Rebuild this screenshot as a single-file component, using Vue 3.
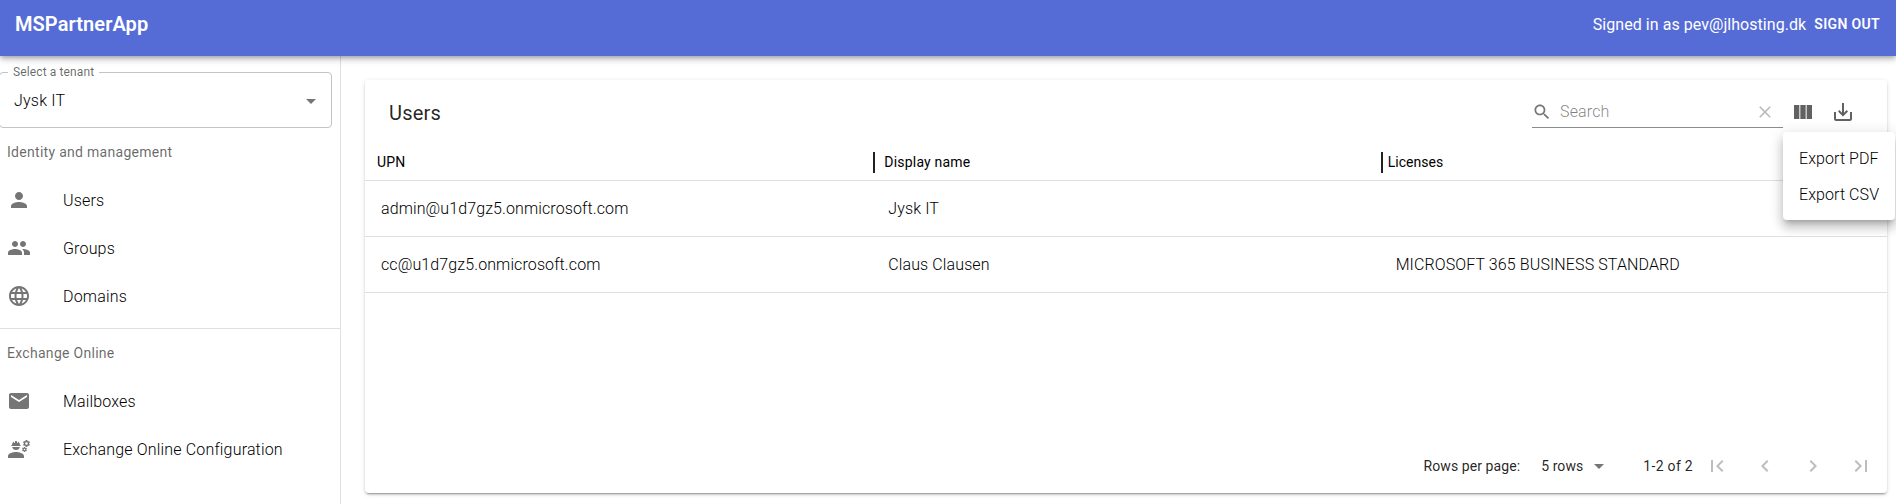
<script setup>
const icons = {
  person: 'M12 12c2.21 0 4-1.79 4-4s-1.79-4-4-4-4 1.79-4 4 1.79 4 4 4zm0 2c-2.67 0-8 1.34-8 4v2h16v-2c0-2.66-5.33-4-8-4z',
  group: 'M16 11c1.66 0 2.99-1.34 2.99-3S17.66 5 16 5s-3 1.34-3 3 1.34 3 3 3zm-8 0c1.66 0 2.99-1.34 2.99-3S9.66 5 8 5 5 6.34 5 8s1.34 3 3 3zm0 2c-2.33 0-7 1.17-7 3.5V19h14v-2.5c0-2.33-4.67-3.5-7-3.5zm8 0c-.29 0-.62.02-.97.05 1.16.84 1.97 1.97 1.97 3.45V19h6v-2.5c0-2.33-4.67-3.5-7-3.5z',
  globe: 'M11.99 2C6.47 2 2 6.48 2 12s4.47 10 9.99 10C17.52 22 22 17.52 22 12S17.52 2 11.99 2zm6.93 6h-2.95c-.32-1.25-.78-2.45-1.38-3.56 1.84.63 3.37 1.91 4.33 3.56zM12 4.04c.83 1.2 1.48 2.53 1.91 3.96h-3.82c.43-1.43 1.08-2.76 1.91-3.96zM4.26 14C4.1 13.36 4 12.69 4 12s.1-1.36.26-2h3.38c-.08.66-.14 1.32-.14 2s.06 1.34.14 2H4.26zm.82 2h2.95c.32 1.25.78 2.45 1.38 3.56-1.84-.63-3.37-1.9-4.33-3.56zm2.95-8H5.08c.96-1.66 2.49-2.93 4.33-3.56C8.81 5.55 8.35 6.75 8.03 8zM12 19.96c-.83-1.2-1.48-2.53-1.91-3.96h3.82c-.43 1.43-1.08 2.76-1.91 3.96zM14.34 14H9.66c-.09-.66-.16-1.32-.16-2s.07-1.35.16-2h4.68c.09.65.16 1.32.16 2s-.07 1.34-.16 2zm.25 5.56c.6-1.11 1.06-2.31 1.38-3.56h2.95c-.96 1.65-2.49 2.93-4.33 3.56zM16.36 14c.08-.66.14-1.32.14-2s-.06-1.34-.14-2h3.38c.16.64.26 1.31.26 2s-.1 1.36-.26 2h-3.38z',
  mail: 'M20 4H4c-1.1 0-1.99.9-1.99 2L2 18c0 1.1.9 2 2 2h16c1.1 0 2-.9 2-2V6c0-1.1-.9-2-2-2zm0 4l-8 5-8-5V6l8 5 8-5v2z',
  engineer: 'M9 15c-2.67 0-8 1.34-8 4v2h16v-2c0-2.66-5.33-4-8-4zM22.1 6.84c.01-.11.02-.22.02-.34s-.01-.23-.03-.34l.74-.58c.07-.05.08-.15.04-.22l-.7-1.21c-.04-.08-.14-.1-.21-.08l-.86.35c-.18-.14-.38-.25-.59-.34l-.13-.93c-.02-.09-.09-.15-.18-.15h-1.4c-.09 0-.16.06-.17.15l-.13.93c-.21.09-.41.21-.59.34l-.87-.35c-.08-.03-.17 0-.21.08l-.7 1.21c-.04.08-.03.17.04.22l.74.58c-.02.11-.03.23-.03.34s.01.23.03.34l-.74.58c-.07.05-.08.15-.04.22l.7 1.21c.04.08.14.1.21.08l.87-.35c.18.14.38.25.59.34l.13.93c.01.09.08.15.17.15h1.4c.09 0 .16-.06.17-.15l.13-.93c.21-.09.41-.21.59-.34l.87.35c.08.03.17 0 .21-.08l.7-1.21c.04-.08.03-.17-.04-.22l-.73-.58zm-2.6.91c-.69 0-1.25-.56-1.25-1.25s.56-1.25 1.25-1.25 1.25.56 1.25 1.25-.56 1.25-1.25 1.25zM19.92 11.68l-.5-.87c-.03-.06-.1-.08-.15-.06l-.62.25c-.13-.1-.27-.18-.42-.24l-.09-.66c-.02-.06-.08-.1-.14-.1h-1c-.06 0-.11.04-.12.11l-.09.66c-.15.06-.29.15-.42.24l-.62-.25c-.06-.02-.12 0-.15.06l-.5.87c-.03.06-.02.12.03.16l.53.41c-.01.08-.02.16-.02.24 0 .08.01.17.02.24l-.53.41c-.05.04-.06.11-.03.16l.5.87c.03.06.1.08.15.06l.62-.25c.13.1.27.18.42.24l.09.66c.01.07.06.11.12.11h1c.06 0 .12-.04.12-.11l.09-.66c.15-.06.29-.15.42-.24l.62.25c.06.02.12 0 .15-.06l.5-.87c.03-.06.02-.12-.03-.16l-.52-.41c.01-.08.02-.16.02-.24 0-.08-.01-.17-.02-.24l.53-.41c.05-.04.06-.11.04-.17zm-2.42 1.65c-.46 0-.83-.38-.83-.83 0-.46.38-.83.83-.83s.83.38.83.83c0 .46-.37.83-.83.83zM4.74 9h8.52c.27 0 .49-.22.49-.49v-.02c0-.27-.22-.49-.49-.49H13c0-1.48-.81-2.75-2-3.45v.95c0 .28-.22.5-.5.5s-.5-.22-.5-.5V4.14C9.68 4.06 9.35 4 9 4s-.68.06-1 .14V5.5c0 .28-.22.5-.5.5S7 5.78 7 5.5v-.95C5.81 5.25 5 6.52 5 8h-.26c-.27 0-.49.22-.49.49v.03c0 .26.22.48.49.48zM9 13c1.86 0 3.41-1.28 3.86-3H5.14c.45 1.72 2 3 3.86 3z',
  arrow: 'M7 10l5 5 5-5z',
  search: 'M15.5 14h-.79l-.28-.27C15.41 12.59 16 11.11 16 9.5 16 5.91 13.09 3 9.5 3S3 5.91 3 9.5 5.91 16 9.5 16c1.61 0 3.09-.59 4.23-1.57l.27.28v.79l5 4.99L20.49 19l-4.99-5zm-6 0C7.01 14 5 11.99 5 9.5S7.01 5 9.5 5 14 7.01 14 9.5 11.99 14 9.5 14z',
  clear: 'M19 6.41L17.59 5 12 10.59 6.41 5 5 6.41 10.59 12 5 17.59 6.41 19 12 13.41 17.59 19 19 17.59 13.41 12z',
  columns: 'M14.67 5v14H9.33V5h5.34zm1 14H21V5h-5.33v14zm-7.34 0V5H3v14h5.33z',
  save: 'M19 12v7H5v-7H3v7c0 1.1.9 2 2 2h14c1.1 0 2-.9 2-2v-7h-2zm-6 .67l2.59-2.58L17 11.5l-5 5-5-5 1.41-1.41L11 12.67V3h2z',
}
const groups = [
  { title: 'Identity and management', items: [['person', 'Users'], ['group', 'Groups'], ['globe', 'Domains']] },
  { title: 'Exchange Online', items: [['mail', 'Mailboxes'], ['engineer', 'Exchange Online Configuration']] },
]
const columns = ['UPN', 'Display name', 'Licenses']
const rows = [
  ['admin@u1d7gz5.onmicrosoft.com', 'Jysk IT', ''],
  ['cc@u1d7gz5.onmicrosoft.com', 'Claus Clausen', 'MICROSOFT 365 BUSINESS STANDARD'],
]
const pager = [
  'M18.41 16.59L13.82 12l4.59-4.59L17 6l-6 6 6 6zM6 6h2v12H6z',
  'M15.41 7.41L14 6l-6 6 6 6 1.41-1.41L10.83 12z',
  'M10 6L8.59 7.41 13.17 12l-4.58 4.59L10 18l6-6z',
  'M5.59 7.41L10.18 12l-4.59 4.59L7 18l6-6-6-6zM16 6h2v12h-2z',
]
</script>

<template>
  <div class="app">
    <header class="appbar">
      <h1 class="brand">MSPartnerApp</h1>
      <span class="signed">Signed in as pev@jlhosting.dk</span>
      <button class="signout">SIGN OUT</button>
    </header>

    <div class="body">
      <nav class="sidebar">
        <fieldset class="tenant">
          <legend>Select a tenant</legend>
          <div class="tenant-value">
            <span>Jysk IT</span>
            <svg class="icon" viewBox="0 0 24 24"><path :d="icons.arrow" /></svg>
          </div>
        </fieldset>
        <section v-for="g in groups" :key="g.title" class="nav-group">
          <h2>{{ g.title }}</h2>
          <a v-for="[icon, label] in g.items" :key="label" class="nav-item">
            <svg class="icon" viewBox="0 0 24 24"><path :d="icons[icon]" /></svg>
            <span>{{ label }}</span>
          </a>
        </section>
      </nav>

      <main class="main">
        <div class="card">
          <div class="toolbar">
            <h3>Users</h3>
            <div class="search">
              <svg class="icon small" viewBox="0 0 24 24"><path :d="icons.search" /></svg>
              <span class="placeholder">Search</span>
              <svg class="icon small faded" viewBox="0 0 24 24"><path :d="icons.clear" /></svg>
            </div>
            <svg class="icon tool" viewBox="0 0 24 24"><path :d="icons.columns" /></svg>
            <div class="export">
              <svg class="icon tool" viewBox="0 0 24 24"><path :d="icons.save" /></svg>
              <div class="menu">
                <div class="menu-item">Export PDF</div>
                <div class="menu-item">Export CSV</div>
              </div>
            </div>
          </div>

          <div class="row head">
            <div v-for="c in columns" :key="c" class="th">{{ c }}</div>
          </div>
          <div v-for="r in rows" :key="r[0]" class="row">
            <div v-for="(v, i) in r" :key="i" class="td">{{ v }}</div>
          </div>

          <div class="footer">
            <span class="per-page">Rows per page:</span>
            <span class="count">5 rows</span>
            <svg class="icon drop" viewBox="0 0 24 24"><path :d="icons.arrow" /></svg>
            <span class="range">1-2 of 2</span>
            <svg v-for="p in pager" :key="p" class="icon page" viewBox="0 0 24 24"><path :d="p" /></svg>
          </div>
        </div>
      </main>
    </div>
  </div>
</template>

<style>
body { overflow: hidden; }
</style>

<style scoped>
.app {
  height: 504px;
  display: flex;
  flex-direction: column;
  overflow: hidden;
  background: #fff;
  color: rgba(0, 0, 0, 0.87);
  font-family: Roboto, "Noto Sans", sans-serif;
  font-size: 16px;
  line-height: 24px;
  letter-spacing: 0.15px;
}
.app * { box-sizing: border-box; }
h1, h2, h3 { margin: 0; }
.icon { width: 24px; height: 24px; flex: none; fill: #757575; display: block; }
.small { width: 20px; height: 20px; }

.appbar {
  flex: none;
  height: 56px;
  display: flex;
  align-items: center;
  padding: 0 16px 8px 15px;
  background: #556cd6;
  color: #fff;
  position: relative;
  z-index: 2;
  box-shadow: 0 2px 4px -1px rgba(0,0,0,.2), 0 4px 5px 0 rgba(0,0,0,.14), 0 1px 10px 0 rgba(0,0,0,.12);
}
.brand { flex: 1; font-size: 20px; font-weight: 600; letter-spacing: 0.08px; }
.signed { letter-spacing: 0.05px; padding-top: 2px; }
.signout {
  border: 0; background: none; color: inherit; padding: 0; margin-left: 8px;
  font: 600 14px/24px Roboto, "Noto Sans", sans-serif; letter-spacing: 0.35px;
}

.body { flex: 1; display: flex; min-height: 0; }
.sidebar { flex: none; width: 341px; border-right: 1px solid #e0e0e0; }
.tenant {
  width: 333px;
  height: 62px;
  margin: 10px 0 0 -1px;
  padding: 0 8px 0 14px;
  border: 1px solid #c4c4c4;
  border-radius: 4px;
}
.tenant legend {
  margin-left: -6px; padding: 0 5px; font-size: 12px; line-height: 12px; letter-spacing: 0.12px;
  color: rgba(0, 0, 0, 0.6);
}
.tenant-value { display: flex; align-items: center; justify-content: space-between; height: 34px; margin-top: 6px; font-weight: 300; letter-spacing: 0.2px; color: #000; }
.nav-group { padding-bottom: 8px; border-bottom: 1px solid #e0e0e0; }
.nav-group:last-child { border-bottom: 0; }
.nav-group h2 { height: 48px; padding-left: 7px; font-size: 14px; line-height: 48px; font-weight: 400; letter-spacing: 0.29px; color: rgba(0, 0, 0, 0.6); }
.nav-item { height: 48px; display: flex; align-items: center; padding-left: 7px; gap: 32px; font-weight: 300; letter-spacing: 0.17px; color: #000; }
.nav-item span { padding-top: 2px; }

.main { flex: 1; padding: 24px 9px 11px 24px; }
.card {
  height: 413px;
  display: flex;
  flex-direction: column;
  border-radius: 4px;
  background: #fff;
  box-shadow: 0 3px 1px -2px rgba(0,0,0,.2), 0 2px 2px 0 rgba(0,0,0,.14), 0 1px 5px 0 rgba(0,0,0,.12);
}
.toolbar { flex: none; height: 64px; display: flex; align-items: center; padding: 0 32px 0 24px; }
.toolbar h3 { flex: 1; font-size: 20px; font-weight: 400; letter-spacing: 0.2px; padding-top: 1px; }
.search {
  width: 251px; height: 32px; display: flex; align-items: center;
  border-bottom: 1px solid #8c8c8c; padding: 0 8px 0 0; margin-right: 8px;
}
.placeholder { flex: 1; margin-left: 8px; font-weight: 300; color: rgba(0, 0, 0, 0.5); }
.faded { fill: #bdbdbd; }
.tool { fill: #616161; }
.export { position: relative; margin-left: 16px; }
.menu {
  position: absolute;
  top: 32px;
  right: -40px;
  width: 112px;
  height: 88px;
  padding: 8px 0;
  border-radius: 4px;
  background: #fff;
  z-index: 3;
  box-shadow: 0 5px 5px -3px rgba(0,0,0,.2), 0 8px 10px 1px rgba(0,0,0,.14), 0 3px 14px 2px rgba(0,0,0,.12);
}
.menu-item { height: 36px; padding-left: 16px; line-height: 38px; font-weight: 300; letter-spacing: 0.08px; color: #000; white-space: nowrap; }

.row { flex: none; height: 56px; display: grid; grid-template-columns: repeat(3, 1fr); align-items: center; border-bottom: 1px solid #e0e0e0; }
.head { height: 37px; }
.th { padding-left: 12px; display: flex; align-items: center; height: 21px; font-size: 14px; font-weight: 400; letter-spacing: 0.2px; color: #000; }
.th + .th { border-left: 2px solid rgba(0, 0, 0, 0.87); margin-left: 1px; padding-left: 9px; }
.th + .th + .th { padding-left: 5px; letter-spacing: 0.05px; }
.td { padding-left: 16px; font-weight: 300; letter-spacing: 0.11px; color: #000; }

.footer { margin: auto 0 1px; height: 52px; display: flex; align-items: center; justify-content: flex-end; padding-right: 14px; font-size: 14px; letter-spacing: 0.08px; }
.count { margin-left: 21px; }
.drop { margin-left: 4px; }
.range { margin: 0 12px 0 32px; letter-spacing: 0.3px; }
.page { fill: #bdbdbd; }
.page + .page { margin-left: 24px; }
</style>
